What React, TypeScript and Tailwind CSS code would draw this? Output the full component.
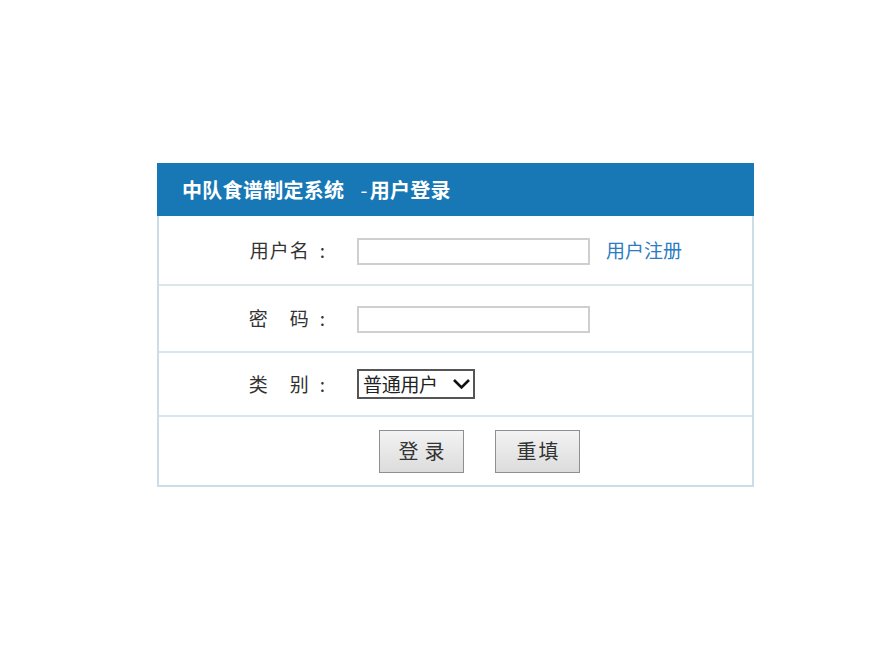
import React from "react";

const font = { fontFamily: '"Noto Sans CJK SC", "Noto Sans", sans-serif' };

function Row({ children, h, last }: { children: React.ReactNode; h: string; last?: boolean }) {
  return (
    <div className={`flex items-center ${h} ${last ? "" : "border-b-2 border-[#dae6ed]"}`}>{children}</div>
  );
}

function Label({ children }: { children: React.ReactNode }) {
  return (
    <div className="w-[198px] flex justify-end items-center pr-[31px] text-[19px] text-[#333] tracking-[1px]">
      <span>{children}</span>
      <span className="ml-[10px]">:</span>
    </div>
  );
}

export default function App() {
  return (
    <div className="w-[894px] h-[670px] bg-white" style={font}>
      <div className="pt-[163px] pl-[157px]">
        <div className="w-[597px] border-2 border-[#cddde6] border-t-0">
          <div className="h-[53px] -mx-[2px] bg-[#1878b5] flex items-center pl-[25px] text-white text-[20px] font-bold tracking-[0.3px]">
            中队食谱制定系统
            <span className="ml-[16px] font-normal">-</span>
            <span className="ml-[2px]">用户登录</span>
          </div>
          <Row h="h-[70px]">
            <Label>用户名</Label>
            <input className="mt-[2px] w-[233px] h-[27px] border-2 border-[#cfcfcf] bg-white outline-none" />
            <a className="ml-[16px] text-[19px] text-[#2b7cc3]" href="#">
              用户注册
            </a>
          </Row>
          <Row h="h-[67px]">
            <Label>密&nbsp;&nbsp;&nbsp;&nbsp;码</Label>
            <input type="password" className="mt-[2px] w-[233px] h-[27px] border-2 border-[#cfcfcf] bg-white outline-none" />
          </Row>
          <Row h="h-[64px]">
            <Label>类&nbsp;&nbsp;&nbsp;&nbsp;别</Label>
            <div className="w-[118px] h-[30px] border-2 border-[#555] flex items-center justify-between pl-[4px] pr-[2px] text-[19px] text-[#222]">
              <span className="tracking-[-0.3px]">普通用户</span>
              <svg width="19" height="14" viewBox="0 0 19 14">
                <path d="M2 3 L9.5 10.5 L17 3" fill="none" stroke="#111" strokeWidth="2.6" />
              </svg>
            </div>
          </Row>
          <Row h="h-[68px]" last>
            <div className="pl-[220px] flex gap-[31px]">
              <button className="w-[85px] h-[43px] border border-[#8f8f8f] bg-gradient-to-b from-[#f3f3f3] to-[#dcdcdc] text-[20px] text-[#333] tracking-[6px] pl-[6px]">
                登录
              </button>
              <button className="w-[85px] h-[43px] border border-[#8f8f8f] bg-gradient-to-b from-[#f3f3f3] to-[#dcdcdc] text-[20px] text-[#333] tracking-[2px] pl-[2px]">
                重填
              </button>
            </div>
          </Row>
        </div>
      </div>
    </div>
  );
}
